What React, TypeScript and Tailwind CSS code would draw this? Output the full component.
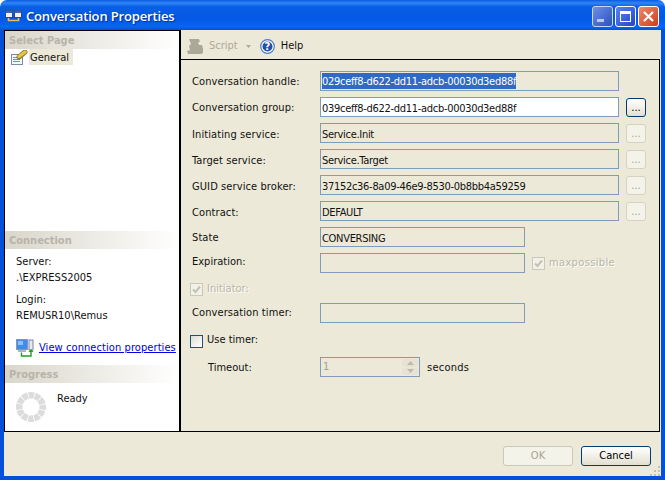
import React from 'react';

const font = "font-['DejaVu_Sans_Condensed','DejaVu_Sans',sans-serif]";

const DotsButton: React.FC<{ enabled?: boolean }> = ({ enabled }) =>
  enabled ? (
    <button className="w-5 h-[19px] rounded-[3px] border border-[#003c74] bg-gradient-to-b from-white to-[#e3dfd0] text-[11px] leading-[15px] text-black">
      ...
    </button>
  ) : (
    <button className="w-5 h-[19px] rounded-[3px] border border-[#d6d2c2] bg-[#f4f3ea] text-[11px] leading-[15px] text-[#a5a290]">
      ...
    </button>
  );

const Field: React.FC<{ label: string; value?: string; selected?: boolean; white?: boolean; short?: boolean; browse?: 'on' | 'off'; raise?: boolean; low?: boolean }> = ({
  label,
  value,
  selected,
  white,
  short,
  browse,
  raise,
  low,
}) => (
  <div className="flex h-5 items-center">
    <div className={`w-[128px] tracking-[0.1px] text-[#111] ${raise ? 'self-start leading-[20px]' : low ? 'pt-[4px]' : 'pt-[2px]'}`}>{label}</div>
    <div
      className={`h-5 border border-[#7f9db9] px-[1px] leading-[21px] tracking-[-0.3px] whitespace-nowrap text-[#111] ${short ? 'w-[205px]' : 'w-[299px]'} ${white ? 'bg-white' : 'bg-[#ece9d8]'}`}
    >
      {selected ? <span className="bg-[#316ac5] text-white inline-block h-4 leading-[17px] mt-[1px] align-top">{value}</span> : value}
    </div>
    {browse && (
      <div className="ml-[7px]">
        <DotsButton enabled={browse === 'on'} />
      </div>
    )}
  </div>
);

const Check: React.FC<{ checked?: boolean }> = ({ checked }) =>
  checked ? (
    <div className="w-[13px] h-[13px] border border-[#cac8bb] bg-[#f2f1e8] flex items-center justify-center">
      <svg width="9" height="9" viewBox="0 0 9 9">
        <path d="M1 4.5 L3.5 7 L8 1.5" fill="none" stroke="#c3c1b2" strokeWidth="2" />
      </svg>
    </div>
  ) : (
    <div className="w-[13px] h-[13px] border border-[#1c5180] bg-gradient-to-br from-[#e0ded2] to-white" />
  );

const SectionHeader: React.FC<{ title: string }> = ({ title }) => (
  <div className="h-[18px] shrink-0 bg-gradient-to-r from-[#d9d6ca] to-white pl-1 text-[11px] font-bold leading-[20px] text-[#b8b4a8]">{title}</div>
);

const ProgressRing = () => (
  <svg width="32" height="32" viewBox="0 0 32 32">
    <circle cx="16" cy="16" r="11.75" fill="none" stroke="#dcdcdc" strokeWidth="6.5" strokeDasharray="5.4 0.75" strokeDashoffset="2.7" />
  </svg>
);

const GeneralIcon = () => (
  <svg width="17" height="15" viewBox="0 0 17 15">
    <rect x="0.5" y="4.5" width="11" height="10" fill="#f4f7fc" stroke="#7d8aa6" />
    <path d="M2 7.5h7M2 9.5h7M2 11.5h7" stroke="#6f8fc8" />
    <path d="M8 7 L14 2" stroke="#7f7a2c" strokeWidth="5" strokeLinecap="round" />
    <path d="M8 6.5 L14 2" stroke="#e8c24a" strokeWidth="3.4" strokeLinecap="round" />
  </svg>
);

const ConnectionIcon = () => (
  <svg width="18" height="18" viewBox="0 0 18 18">
    <rect x="0.5" y="0.5" width="11" height="10" fill="#3f8cf0" stroke="#8a97ab" />
    <rect x="2" y="2" width="5" height="4" fill="#8cc0fa" />
    <rect x="2" y="11" width="8" height="2" fill="#a9b6c8" />
    <rect x="13" y="1" width="4" height="10" fill="#e6e9ef" stroke="#7b8797" />
    <path d="M5.5 13.5v3.5h9.5v-5" fill="none" stroke="#20a020" strokeWidth="1.4" />
    <path d="M12.5 13l2.5-3 2.5 3z" fill="#20a020" />
  </svg>
);

const ScriptIcon = () => (
  <svg width="18" height="17" viewBox="0 0 18 17">
    <path d="M3 1h10l1 3h-2l1 3h3l1 4v4l-2 1H2L1 13l3-1-1-4 2-2z" fill="#aca899" />
  </svg>
);

const HelpIcon = () => (
  <svg width="15" height="15" viewBox="0 0 15 15">
    <circle cx="7.5" cy="7.5" r="6.8" fill="#fff" stroke="#4a78cc" strokeWidth="1.2" />
    <circle cx="7.5" cy="7.5" r="5" fill="#2450a8" />
    <text x="7.5" y="11" textAnchor="middle" fontSize="10" fontWeight="700" fill="#fff" fontFamily="DejaVu Sans">?</text>
  </svg>
);

const TitleButtons = () => (
  <div className="flex gap-[2px]">
    <div className="w-[21px] h-[21px] rounded-[3px] border border-[#c9d6f4] bg-gradient-to-br from-[#6f8fe6] to-[#2a4fc4] flex items-end p-1">
      <div className="w-[7px] h-[3px] bg-[#b9c7ee]" />
    </div>
    <div className="w-[21px] h-[21px] rounded-[3px] border border-white bg-gradient-to-br from-[#5b84ee] to-[#1f45c8] flex items-center justify-center">
      <div className="w-[11px] h-[11px] border border-white border-t-[3px]" />
    </div>
    <div className="w-[21px] h-[21px] rounded-[3px] border border-white bg-gradient-to-br from-[#ec8a6a] to-[#cc3a12] flex items-center justify-center">
      <svg width="13" height="13" viewBox="0 0 13 13">
        <path d="M2 2l9 9M11 2l-9 9" stroke="#fff" strokeWidth="2.2" />
      </svg>
    </div>
  </div>
);

const App: React.FC = () => {
  return (
    <div className={`w-[665px] h-[480px] flex flex-col overflow-hidden bg-white text-[11px] text-[#111] ${font}`}>
      {/* title bar */}
      <div className="h-[30px] shrink-0 rounded-t-[7px] bg-[linear-gradient(to_bottom,#0a5be0_0%,#2f86f5_10%,#0a5fe6_22%,#0458e4_60%,#0666f0_90%,#0450d4_100%)] flex items-center pl-[5px] pr-[6px] pt-[3px]">
        <svg width="17" height="16" viewBox="0 0 17 16" className="mr-[4px]">
          <rect x="0.5" y="1.5" width="7" height="7" fill="#eef3fc" stroke="#23468c" />
          <rect x="0.5" y="1.5" width="7" height="2.5" fill="#3f62a8" />
          <rect x="9.5" y="1.5" width="7" height="7" fill="#eef3fc" stroke="#23468c" />
          <rect x="9.5" y="1.5" width="7" height="2.5" fill="#3f62a8" />
          <path d="M3.5 9v2.5h10V9" fill="none" stroke="#e8bc50" strokeWidth="1.6" />
        </svg>
        <span className="flex-1 text-[13px] font-semibold tracking-[-0.15px] text-white font-['Open_Sans',sans-serif] [text-shadow:1px_1px_1px_#0a2f90]">Conversation Properties</span>
        <TitleButtons />
      </div>

      {/* window body */}
      <div className="flex-1 flex flex-col border-x-4 border-b-4 border-[#0450d8] bg-[#ece9d8]">
        <div className="h-[402px] flex">
          {/* left panel */}
          <div className="w-[177px] shrink-0 flex flex-col border border-r-2 border-black bg-white">
            <SectionHeader title="Select Page" />
            <div className="flex items-center h-4 pl-[6px]">
              <GeneralIcon />
              <span className="ml-[1px] bg-[#ece9d8] px-[1px] w-[44px] h-4 leading-[17px]">General</span>
            </div>
            <div className="h-[166px]" />
            <SectionHeader title="Connection" />
            <div className="pl-[11px] pt-[5px]">
              <div className="leading-4">Server:</div>
              <div className="leading-4">.\EXPRESS2005</div>
              <div className="leading-4 mt-[6px]">Login:</div>
              <div className="leading-4">REMUSR10\Remus</div>
              <div className="flex items-center mt-[15px] whitespace-nowrap">
                <ConnectionIcon />
                <span className="ml-[5px] tracking-[0.08px] text-[#0000e0] underline">View connection properties</span>
              </div>
            </div>
            <div className="h-[8px]" />
            <SectionHeader title="Progress" />
            <div className="flex pl-[10px] pt-[8px]">
              <ProgressRing />
              <span className="ml-[10px] leading-4">Ready</span>
            </div>
          </div>

          {/* right side */}
          <div className="flex-1 flex flex-col pr-[1px]">
            <div className="h-[29px] flex items-center pl-[5px] pt-[3px] text-[#aca899]">
              <ScriptIcon />
              <span className="ml-[5px]">Script</span>
              <svg width="5" height="3" viewBox="0 0 5 3" className="ml-[8px]">
                <path d="M0 0h5L2.5 3z" fill="#aca899" />
              </svg>
              <div className="ml-[4px] h-4 w-px bg-[#ece9d8]" />
              <div className="ml-[4px]"><HelpIcon /></div>
              <span className="ml-[6px] text-[#111]">Help</span>
            </div>

            <div className="flex-1 flex flex-col gap-[6px] border-y border-r border-black pl-[11px] pt-[11px]">
              <Field label="Conversation handle:" value="029ceff8-d622-dd11-adcb-00030d3ed88f" selected />
              <Field label="Conversation group:" value="039ceff8-d622-dd11-adcb-00030d3ed88f" white browse="on" />
              <Field label="Initiating service:" value="Service.Init" browse="off" low />
              <Field label="Target service:" value="Service.Target" browse="off" low />
              <Field label="GUID service broker:" value="37152c36-8a09-46e9-8530-0b8bb4a59259" browse="off" low />
              <Field label="Contract:" value="DEFAULT" browse="off" low />
              <Field label="State" value="CONVERSING" short />
              <div className="flex h-5 items-center">
                <div className="w-[128px] self-start leading-[17px]">Expiration:</div>
                <div className="w-[205px] h-5 border border-[#7f9db9]" />
                <div className="ml-[7px]"><Check checked /></div>
                <span className="ml-[4px] tracking-[0.35px] text-[#b8b5a6] [text-shadow:1px_1px_0_#fff]">maxpossible</span>
              </div>
              <div className="flex h-5 items-center -ml-[2px]">
                <Check checked />
                <span className="ml-[4px] text-[#b8b5a6] [text-shadow:1px_1px_0_#fff]">Initiator:</span>
              </div>
              <div className="-mt-[2px]">
                <Field label="Conversation timer:" short raise />
              </div>
              <div className="flex h-5 items-center mt-[2px] -ml-[2px]">
                <Check />
                <span className="ml-[4px] -mt-[1px]">Use timer:</span>
              </div>
              <div className="flex h-5 items-center">
                <div className="w-[112px] pl-4 pt-[2px]">Timeout:</div>
                <div className="ml-4 w-[100px] h-5 border border-[#7f9db9] flex justify-between pl-[2px] pr-px py-px">
                  <span className="leading-4 text-[#a5a290]">1</span>
                  <div className="w-4 flex flex-col gap-px">
                    <div className="flex-1 bg-[#e6e3d6] rounded-[2px] flex items-center justify-center">
                      <svg width="7" height="4" viewBox="0 0 7 4"><path d="M0 4l3.5-4L7 4z" fill="#bdbaa9" /></svg>
                    </div>
                    <div className="flex-1 bg-[#e6e3d6] rounded-[2px] flex items-center justify-center">
                      <svg width="7" height="4" viewBox="0 0 7 4"><path d="M0 0l3.5 4L7 0z" fill="#bdbaa9" /></svg>
                    </div>
                  </div>
                </div>
                <span className="ml-[7px] tracking-[0.25px] pt-[2px]">seconds</span>
              </div>
            </div>
          </div>
        </div>

        {/* footer */}
        <div className="relative flex-1 flex justify-end gap-2 pt-[14px] pr-[10px]">
          <button className="w-[70px] h-5 rounded-[3px] border border-[#cac8bb] bg-[#f4f3ea] text-[#a5a290] text-[11px]">OK</button>
          <button className="w-[70px] h-5 rounded-[3px] border border-[#003c74] bg-gradient-to-b from-white to-[#e3dfd0] text-[11px] text-black">Cancel</button>
          <svg width="11" height="11" viewBox="0 0 11 11" className="absolute right-0 bottom-0">
            <path d="M8 1h2v2H8zM4 5h2v2H4zM8 5h2v2H8zM0 9h2v2H0zM4 9h2v2H4zM8 9h2v2H8z" fill="#c4c1b0" />
          </svg>
        </div>
      </div>
    </div>
  );
};

export default App;
